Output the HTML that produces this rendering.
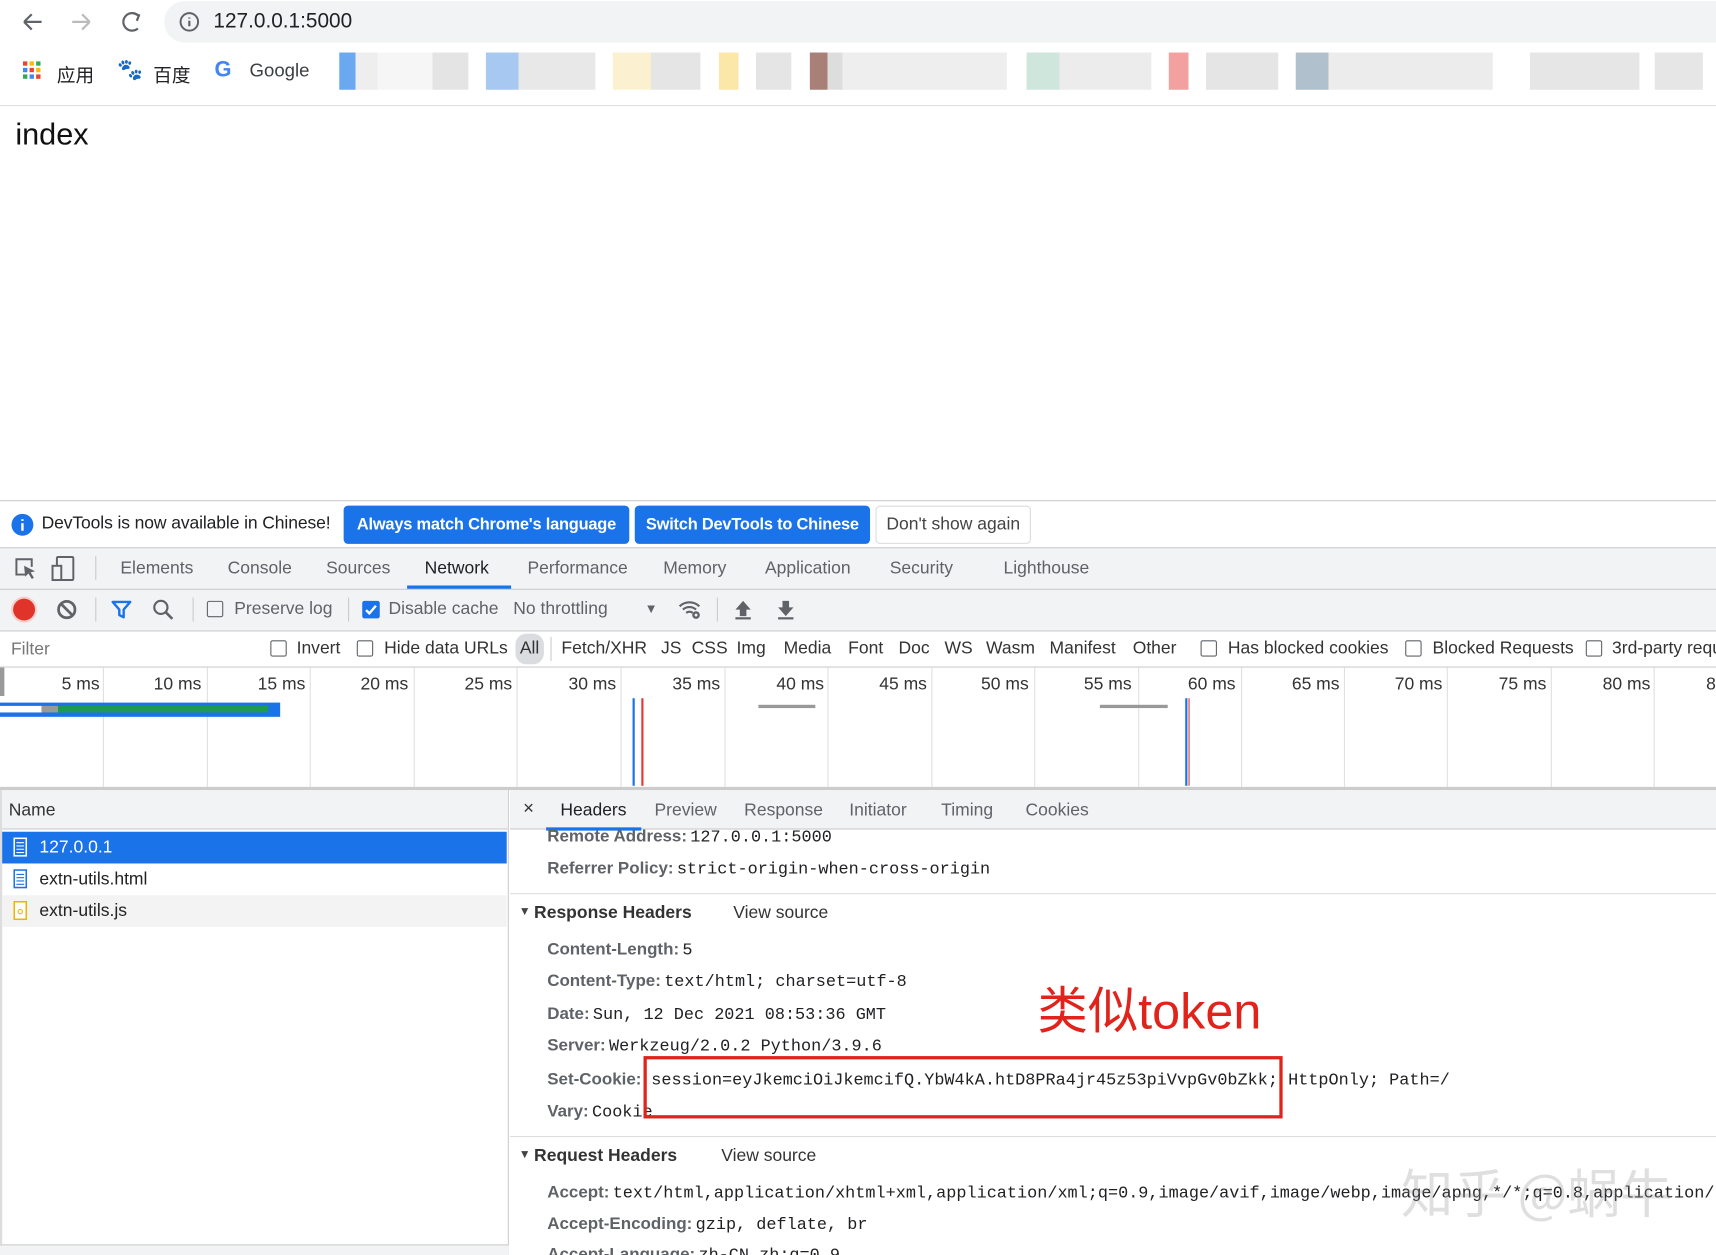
<!DOCTYPE html>
<html><head><meta charset="utf-8"><style>
*{margin:0;padding:0;box-sizing:border-box}
html,body{width:1716px;height:1255px;overflow:hidden;background:#fff}
#w{position:absolute;left:0;top:0;width:1568px;height:1147px;overflow:hidden;transform:scale(1.09439);transform-origin:0 0;font-family:"Liberation Sans","Noto Sans CJK SC",sans-serif;color:#202124}
.a{position:absolute;white-space:nowrap}
.t{font-size:16px;color:#5f6368}
.m{font-family:"Liberation Mono",monospace;font-size:15.4px;color:#202124;margin-left:3px}
.k{font-weight:bold;font-size:15.5px;color:#5f6368}
.cb{position:absolute;width:15px;height:15px;border:1.5px solid #5f6368;border-radius:2px}
.vl{position:absolute;width:1px;background:#e0e0e0}
.sep{position:absolute;width:1px;height:22px;background:#ccc}
.blk{position:absolute;top:48px;height:34px}
</style></head><body><div id="w">
<div class="a" style="left:150px;top:1px;width:1418px;height:38px;background:#f1f3f4;border-radius:19px 0 0 19px"></div>
<svg class="a" style="left:18px;top:9px" width="120" height="22"><path d="M4 11h16M4 11l7-7M4 11l7 7" stroke="#5f6368" stroke-width="2" fill="none"/><path d="M48 11h16M64 11l-7-7M64 11l-7 7" stroke="#bbb" stroke-width="2" fill="none"/><path d="M108 5a8 8 0 1 0 0 12" stroke="#5f6368" stroke-width="2" fill="none"/><path d="M104 3l5 2-2 5" stroke="#5f6368" stroke-width="2" fill="none"/></svg>
<svg class="a" style="left:163px;top:10px" width="20" height="20"><circle cx="10" cy="10" r="8" stroke="#5f6368" stroke-width="1.8" fill="none"/><path d="M10 9v5M10 6v1" stroke="#5f6368" stroke-width="2"/></svg>
<div class="a" style="left:195px;top:9px;font-size:19px">127.0.0.1:5000</div>
<svg class="a" style="left:21px;top:56px" width="18" height="18"><g fill="#ea4335"><rect x="0" y="0" width="4" height="4"/><rect x="6" y="0" width="4" height="4" fill="#fbbc04"/><rect x="12" y="0" width="4" height="4" fill="#34a853"/><rect x="0" y="6" width="4" height="4" fill="#4285f4"/><rect x="6" y="6" width="4" height="4"/><rect x="12" y="6" width="4" height="4" fill="#fbbc04"/><rect x="0" y="12" width="4" height="4" fill="#34a853"/><rect x="6" y="12" width="4" height="4" fill="#4285f4"/><rect x="12" y="12" width="4" height="4"/></g></svg>
<div class="a" style="left:52px;top:55px;font-size:17px">应用</div>
<div class="a" style="left:107px;top:52px;font-size:19px;color:#2932e1">🐾</div>
<div class="a" style="left:140px;top:55px;font-size:17px">百度</div>
<div class="a" style="left:196px;top:53px;font-size:20px;font-weight:bold;color:#4285f4">G</div>
<div class="a" style="left:228px;top:55px;font-size:17px;color:#3c4043">Google</div>
<div class="blk" style="left:310px;width:118px;background:linear-gradient(90deg,#6aa8f0 0 15px,#eee 15px 35px,#f6f6f6 35px 85px,#e4e4e4 85px)"></div>
<div class="blk" style="left:444px;width:100px;background:linear-gradient(90deg,#a7c8f0 0 30px,#e8e8e8 30px)"></div>
<div class="blk" style="left:560px;width:80px;background:linear-gradient(90deg,#fbf0d0 0 35px,#e5e5e5 35px)"></div>
<div class="blk" style="left:657px;width:66px;background:linear-gradient(90deg,#fbe7a8 0 18px,#fff 18px 34px,#e5e5e5 34px)"></div>
<div class="blk" style="left:740px;width:180px;background:linear-gradient(90deg,#a88078 0 16px,#ddd 16px 30px,#eee 30px)"></div>
<div class="blk" style="left:938px;width:114px;background:linear-gradient(90deg,#cfe6dd 0 30px,#ececec 30px)"></div>
<div class="blk" style="left:1068px;width:100px;background:linear-gradient(90deg,#f3a0a0 0 18px,#fff 18px 34px,#e5e5e5 34px)"></div>
<div class="blk" style="left:1184px;width:180px;background:linear-gradient(90deg,#b0c0cc 0 30px,#ececec 30px)"></div>
<div class="blk" style="left:1398px;width:100px;background:#e6e6e6"></div>
<div class="blk" style="left:1512px;width:44px;background:#e6e6e6"></div>
<div class="a" style="left:0;top:96px;width:1568px;height:1px;background:#ddd"></div>
<div class="a" style="left:14px;top:107px;font-size:28px;color:#111">index</div>
<div class="a" style="left:0;top:457px;width:1568px;height:1px;background:#ccc"></div>
<svg class="a" style="left:10px;top:469px" width="21" height="21"><circle cx="10.5" cy="10.5" r="10" fill="#1a73e8"/><path d="M10.5 9v7M10.5 5.5v1.5" stroke="#fff" stroke-width="2.2"/></svg>
<div class="a" style="left:38px;top:470px;font-size:16px;letter-spacing:-0.1px;color:#202124">DevTools is now available in Chinese!</div>
<div class="a" style="left:314px;top:462px;width:261px;height:35px;background:#1a73e8;border-radius:4px;color:#fff;font-weight:bold;font-size:15px;letter-spacing:-0.2px;line-height:35px;text-align:center">Always match Chrome's language</div>
<div class="a" style="left:580px;top:462px;width:215px;height:35px;background:#1a73e8;border-radius:4px;color:#fff;font-weight:bold;font-size:15px;letter-spacing:-0.2px;line-height:35px;text-align:center">Switch DevTools to Chinese</div>
<div class="a" style="left:800px;top:462px;width:142px;height:35px;border:1px solid #dadce0;border-radius:4px;color:#444;font-size:16px;line-height:33px;text-align:center">Don't show again</div>
<div class="a" style="left:0;top:500px;width:1568px;height:76px;background:#f1f3f4;border-top:1px solid #ccc"></div>
<div class="a" style="left:0;top:538px;width:1568px;height:1px;background:#ccc"></div>
<svg class="a" style="left:12px;top:508px" width="62" height="24"><path d="M11 17H3V3h14v7" stroke="#5f6368" stroke-width="1.8" fill="none"/><path d="M10 9l10 5-4 1 3 5-2 1-3-5-3 3z" fill="#5f6368"/><rect x="40" y="1" width="15" height="21" rx="1" stroke="#5f6368" stroke-width="1.8" fill="none"/><rect x="36" y="9" width="8" height="13" fill="#f1f3f4" stroke="#5f6368" stroke-width="1.8"/></svg>
<div class="sep" style="left:87px;top:508px"></div>
<div class="a t" style="left:110px;top:511px">Elements</div>
<div class="a t" style="left:208px;top:511px">Console</div>
<div class="a t" style="left:298px;top:511px">Sources</div>
<div class="a t" style="left:388px;top:511px;color:#202124">Network</div>
<div class="a" style="left:372px;top:535px;width:95px;height:3px;background:#1a73e8"></div>
<div class="a t" style="left:482px;top:511px">Performance</div>
<div class="a t" style="left:606px;top:511px">Memory</div>
<div class="a t" style="left:699px;top:511px">Application</div>
<div class="a t" style="left:813px;top:511px">Security</div>
<div class="a t" style="left:917px;top:511px">Lighthouse</div>
<div class="a" style="left:12px;top:547px;width:20px;height:20px;border-radius:50%;background:#e0342b;box-shadow:0 0 0 2px #f6d0cf"></div>
<svg class="a" style="left:51px;top:547px" width="20" height="20"><circle cx="10" cy="10" r="7.5" stroke="#5f6368" stroke-width="2.5" fill="none"/><path d="M5 5l10 10" stroke="#5f6368" stroke-width="2.5"/></svg>
<div class="sep" style="left:87px;top:546px"></div>
<svg class="a" style="left:101px;top:548px" width="20" height="18"><path d="M2 2h16l-6 7v7l-4-2V9z" stroke="#1a73e8" stroke-width="2.2" fill="none" stroke-linejoin="round"/></svg>
<svg class="a" style="left:139px;top:547px" width="20" height="20"><circle cx="8" cy="8" r="6" stroke="#5f6368" stroke-width="2" fill="none"/><path d="M12.5 12.5l6 6" stroke="#5f6368" stroke-width="2.4"/></svg>
<div class="sep" style="left:176px;top:546px"></div>
<div class="cb" style="left:189px;top:549px"></div>
<div class="a t" style="left:214px;top:548px">Preserve log</div>
<div class="sep" style="left:318px;top:546px"></div>
<div class="a" style="left:331px;top:549px;width:16px;height:16px;background:#1a73e8;border-radius:2px"></div>
<svg class="a" style="left:331px;top:549px" width="16" height="16"><path d="M3.5 8.5l3 3 6-7" stroke="#fff" stroke-width="2.2" fill="none"/></svg>
<div class="a t" style="left:355px;top:548px">Disable cache</div>
<div class="a t" style="left:469px;top:548px">No throttling</div>
<div class="a" style="left:589px;top:549px;font-size:12px;color:#5f6368">▼</div>
<svg class="a" style="left:619px;top:546px" width="24" height="22"><path d="M2 8a13 13 0 0 1 18 0M5 11a9 9 0 0 1 12 0M8 14a5 5 0 0 1 6 0" stroke="#5f6368" stroke-width="2" fill="none"/><circle cx="17" cy="16" r="3.5" fill="#5f6368"/><circle cx="17" cy="16" r="1.3" fill="#f1f3f4"/></svg>
<div class="sep" style="left:655px;top:546px"></div>
<svg class="a" style="left:670px;top:547px" width="60" height="20"><path d="M9 2l-7 8h4v6h6v-6h4z" fill="#5f6368"/><rect x="2" y="17" width="14" height="2" fill="#5f6368"/><path d="M48 16l-7-8h4V2h6v6h4z" fill="#5f6368"/><rect x="41" y="17" width="14" height="2" fill="#5f6368"/></svg>
<div class="a" style="left:0;top:576px;width:1568px;height:1px;background:#ccc"></div>
<div class="a" style="left:5px;top:580px;width:225px;height:26px;background:#fff"></div>
<div class="a" style="left:10px;top:585px;font-size:16px;color:#777">Filter</div>
<div class="a" style="left:0;top:609px;width:1568px;height:1px;background:#ccc"></div>
<div class="cb" style="left:247px;top:585px"></div><div class="a t" style="left:271px;top:584px;color:#333">Invert</div>
<div class="cb" style="left:326px;top:585px"></div><div class="a t" style="left:351px;top:584px;color:#333">Hide data URLs</div>
<div class="a" style="left:471px;top:579px;width:26px;height:28px;background:#dadce0;border-radius:10px"></div>
<div class="a t" style="left:475px;top:584px;color:#333">All</div>
<div class="sep" style="left:503px;top:582px"></div>
<div class="a t" style="left:513px;top:584px;color:#333">Fetch/XHR</div>
<div class="a t" style="left:604px;top:584px;color:#333">JS</div>
<div class="a t" style="left:632px;top:584px;color:#333">CSS</div>
<div class="a t" style="left:673px;top:584px;color:#333">Img</div>
<div class="a t" style="left:716px;top:584px;color:#333">Media</div>
<div class="a t" style="left:775px;top:584px;color:#333">Font</div>
<div class="a t" style="left:821px;top:584px;color:#333">Doc</div>
<div class="a t" style="left:863px;top:584px;color:#333">WS</div>
<div class="a t" style="left:901px;top:584px;color:#333">Wasm</div>
<div class="a t" style="left:959px;top:584px;color:#333">Manifest</div>
<div class="a t" style="left:1035px;top:584px;color:#333">Other</div>
<div class="cb" style="left:1097px;top:585px"></div><div class="a t" style="left:1122px;top:584px;color:#333">Has blocked cookies</div>
<div class="cb" style="left:1284px;top:585px"></div><div class="a t" style="left:1309px;top:584px;color:#333">Blocked Requests</div>
<div class="cb" style="left:1449px;top:585px"></div><div class="a t" style="left:1473px;top:584px;color:#333">3rd-party requests</div>
<div class="a" style="left:0;top:610px;width:4px;height:26px;background:#999"></div>
<div class="vl" style="left:94px;top:610px;height:110px"></div><div class="vl" style="left:189px;top:610px;height:110px"></div><div class="vl" style="left:283px;top:610px;height:110px"></div><div class="vl" style="left:378px;top:610px;height:110px"></div><div class="vl" style="left:472px;top:610px;height:110px"></div><div class="vl" style="left:567px;top:610px;height:110px"></div><div class="vl" style="left:662px;top:610px;height:110px"></div><div class="vl" style="left:756px;top:610px;height:110px"></div><div class="vl" style="left:851px;top:610px;height:110px"></div><div class="vl" style="left:945px;top:610px;height:110px"></div><div class="vl" style="left:1040px;top:610px;height:110px"></div><div class="vl" style="left:1134px;top:610px;height:110px"></div><div class="vl" style="left:1228px;top:610px;height:110px"></div><div class="vl" style="left:1322px;top:610px;height:110px"></div><div class="vl" style="left:1417px;top:610px;height:110px"></div><div class="vl" style="left:1511px;top:610px;height:110px"></div>
<div class="a" style="top:617px;left:0;width:1568px;height:24px;overflow:hidden;font-size:16px;color:#333">
<span class="a" style="right:1477px">5 ms</span><span class="a" style="right:1384px">10 ms</span><span class="a" style="right:1289px">15 ms</span><span class="a" style="right:1195px">20 ms</span><span class="a" style="right:1100px">25 ms</span><span class="a" style="right:1005px">30 ms</span><span class="a" style="right:910px">35 ms</span><span class="a" style="right:815px">40 ms</span><span class="a" style="right:721px">45 ms</span><span class="a" style="right:628px">50 ms</span><span class="a" style="right:534px">55 ms</span><span class="a" style="right:439px">60 ms</span><span class="a" style="right:344px">65 ms</span><span class="a" style="right:250px">70 ms</span><span class="a" style="right:155px">75 ms</span><span class="a" style="right:60px">80 ms</span><span class="a" style="left:1559px">85 ms</span></div>
<div class="a" style="left:0;top:642px;width:256px;height:13px;background:#1a73e8"></div>
<div class="a" style="left:0;top:645px;width:38px;height:6px;background:#fff"></div>
<div class="a" style="left:38px;top:645px;width:15px;height:6px;background:#999"></div>
<div class="a" style="left:53px;top:645px;width:192px;height:6px;background:#1e9b50"></div>
<div class="a" style="left:693px;top:644px;width:52px;height:3px;background:#999"></div>
<div class="a" style="left:1005px;top:644px;width:62px;height:3px;background:#999"></div>
<div class="a" style="left:578px;top:638px;width:2px;height:80px;background:#1a73e8"></div>
<div class="a" style="left:586px;top:638px;width:2px;height:80px;background:#e53935"></div>
<div class="a" style="left:1083px;top:638px;width:2px;height:80px;background:#1a73e8"></div>
<div class="a" style="left:1086px;top:638px;width:1px;height:80px;background:#e53935"></div>
<div class="a" style="left:0;top:719px;width:1568px;height:3px;background:#ccc"></div>
<div class="a" style="left:0;top:722px;width:465px;height:425px;border-left:2px solid #ddd;border-right:1px solid #ccc"></div>
<div class="a" style="left:2px;top:722px;width:462px;height:36px;background:#f1f3f4;border-bottom:1px solid #ccc"></div>
<div class="a" style="left:8px;top:732px;font-size:16px;color:#333">Name</div>
<div class="a" style="left:2px;top:760px;width:461px;height:29px;background:#1a73e8"></div>
<div class="a" style="left:2px;top:818px;width:461px;height:29px;background:#f3f3f3"></div>
<svg class="a" style="left:12px;top:765px" width="14" height="80"><rect x="1" y="1" width="11" height="16" fill="none" stroke="#fff" stroke-width="1.4"/><path d="M3 5h7M3 8h7M3 11h7M3 14h7" stroke="#fff"/><rect x="1" y="30" width="11" height="16" fill="#fff" stroke="#1a73e8" stroke-width="1.4"/><path d="M3 34h7M3 37h7M3 40h7M3 43h7" stroke="#1a73e8"/><rect x="1" y="59" width="11" height="16" fill="#fff" stroke="#f0b400" stroke-width="1.4"/><circle cx="6.5" cy="68" r="2" fill="none" stroke="#f0b400"/></svg>
<div class="a" style="left:36px;top:766px;font-size:16px;color:#fff">127.0.0.1</div>
<div class="a" style="left:36px;top:795px;font-size:16px;color:#222">extn-utils.html</div>
<div class="a" style="left:36px;top:824px;font-size:16px;color:#222">extn-utils.js</div>
<div class="a" style="left:0;top:1137px;width:465px;height:10px;background:#f1f3f4;border-top:1px solid #ccc"></div>
<div class="a" style="left:466px;top:722px;width:1102px;height:36px;background:#f1f3f4;border-bottom:1px solid #ccc"></div>
<div class="a" style="left:478px;top:729px;font-size:17px;color:#333">×</div>
<div class="a t" style="left:512px;top:732px;color:#202124">Headers</div>
<div class="a" style="left:499px;top:756px;width:87px;height:3px;background:#1a73e8"></div>
<div class="a t" style="left:598px;top:732px">Preview</div>
<div class="a t" style="left:680px;top:732px">Response</div>
<div class="a t" style="left:776px;top:732px">Initiator</div>
<div class="a t" style="left:860px;top:732px">Timing</div>
<div class="a t" style="left:937px;top:732px">Cookies</div>
<div class="a" style="left:500px;top:756px"><span class="k">Remote Address:</span><span class="m">127.0.0.1:5000</span></div>
<div class="a" style="left:500px;top:785px"><span class="k">Referrer Policy:</span><span class="m">strict-origin-when-cross-origin</span></div>
<div class="a" style="left:466px;top:816px;width:1102px;height:1px;background:#ddd"></div>
<div class="a" style="left:474px;top:827px;font-size:11px;color:#444">▼</div>
<div class="a" style="left:488px;top:826px;font-weight:bold;font-size:16px;color:#333">Response Headers</div>
<div class="a" style="left:670px;top:826px;font-size:16px;color:#333">View source</div>
<div class="a" style="left:500px;top:859px"><span class="k">Content-Length:</span><span class="m">5</span></div>
<div class="a" style="left:500px;top:888px"><span class="k">Content-Type:</span><span class="m">text/html; charset=utf-8</span></div>
<div class="a" style="left:500px;top:918px"><span class="k">Date:</span><span class="m">Sun, 12 Dec 2021 08:53:36 GMT</span></div>
<div class="a" style="left:500px;top:947px"><span class="k">Server:</span><span class="m">Werkzeug/2.0.2 Python/3.9.6</span></div>
<div class="a" style="left:500px;top:978px"><span class="k">Set-Cookie:</span><span class="m" style="margin-left:9px">session=eyJkemciOiJkemcifQ.YbW4kA.htD8PRa4jr45z53piVvpGv0bZkk; HttpOnly; Path=/</span></div>
<div class="a" style="left:500px;top:1007px"><span class="k">Vary:</span><span class="m">Cookie</span></div>
<div class="a" style="left:466px;top:1038px;width:1102px;height:1px;background:#ddd"></div>
<div class="a" style="left:474px;top:1049px;font-size:11px;color:#444">▼</div>
<div class="a" style="left:488px;top:1048px;font-weight:bold;font-size:16px;color:#333">Request Headers</div>
<div class="a" style="left:659px;top:1048px;font-size:16px;color:#333">View source</div>
<div class="a" style="left:500px;top:1081px"><span class="k">Accept:</span><span class="m">text/html,application/xhtml+xml,application/xml;q=0.9,image/avif,image/webp,image/apng,*/*;q=0.8,application/signed-exchange</span></div>
<div class="a" style="left:500px;top:1110px"><span class="k">Accept-Encoding:</span><span class="m">gzip, deflate, br</span></div>
<div class="a" style="left:500px;top:1138px"><span class="k">Accept-Language:</span><span class="m">zh-CN,zh;q=0.9</span></div>
<div class="a" style="left:588px;top:965px;width:584px;height:57px;border:3.5px solid #e0241b"></div>
<div class="a" style="left:948px;top:888px;font-size:46px;color:#e0241b">类似token</div>
<div class="a" style="left:1280px;top:1052px;font-size:48px;color:rgba(150,150,150,0.3);font-family:'Noto Sans CJK SC',sans-serif">知乎 @蜗牛</div>
</div></body></html>
